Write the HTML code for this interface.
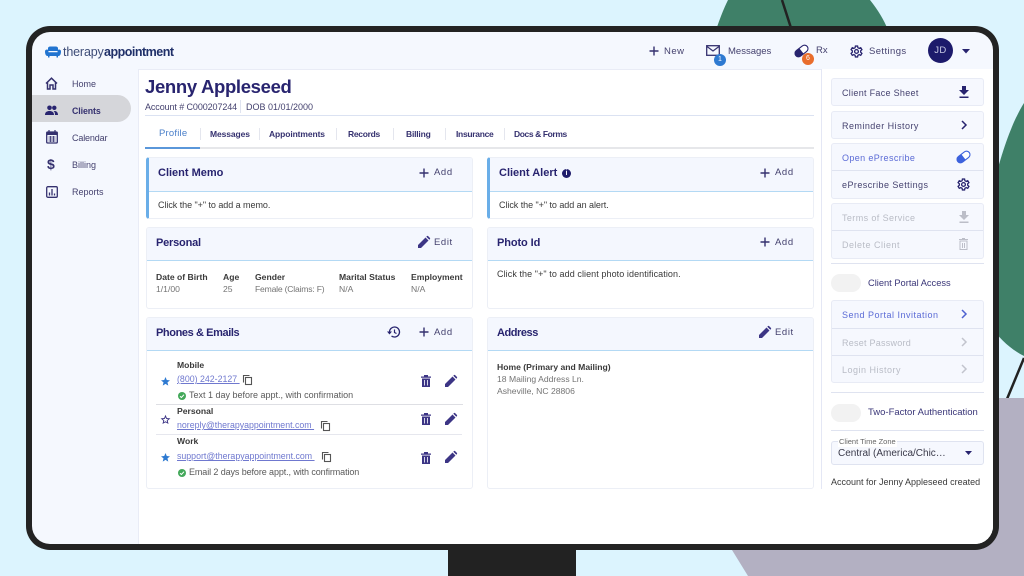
<!DOCTYPE html>
<html><head><meta charset="utf-8"><title>Therapy Appointment</title>
<style>
html,body{margin:0;padding:0}
#s{position:relative;width:1024px;height:576px;overflow:hidden;background:#dcf4fe;font-family:"Liberation Sans",sans-serif;color:#2f2b6b}
#s div,#s span.t,#s svg.a{position:absolute}
.t{position:absolute;white-space:nowrap;line-height:12px;height:12px}
.nav{font-size:9px;color:#45426f}
.h{font-size:11px;font-weight:bold;color:#28246f}
.act{font-size:9.5px;letter-spacing:.6px;color:#45426f}
.b{font-size:9px;color:#3a3a3a}
.bb{font-size:8.6px;font-weight:bold;color:#3a3a3a}
.g{font-size:8.6px;color:#747474}
.tab{font-size:8.5px;font-weight:bold;color:#35316f;letter-spacing:-.1px}
.card{background:#fff;border:1px solid #eceff6;border-radius:3px;box-sizing:border-box;overflow:hidden}
.hd{left:0;right:0;top:0;background:linear-gradient(#f4f7fe calc(100% - 1px),#b3d9f4 0)}
.rb{background:#f6f8fe;border:1px solid #e8ebf5;border-radius:3px;box-sizing:border-box}
.r{font-size:9px;letter-spacing:.4px;color:#45426f}
.dis{color:#b9bcc6}
.blue{color:#5b6bd6}
.lnk{font-size:8.8px;color:#6f78cf;text-decoration:underline}
.sep{background:#dfe3f0;height:1px}
svg{overflow:visible}
</style></head><body>
<div id="s">
<svg class="a" style="left:0;top:0" width="1024" height="576">
<path d="M716 30C720 18 724 8 728 0H870C878 10 884 20 888 30Z" fill="#3f8068"/>
<path d="M782 0L791 28" stroke="#222" stroke-width="2.5"/>
<path d="M990 200C1000 155 1012 122 1024 103V356C1012 350 1000 340 990 325Z" fill="#3f8068"/>
<path d="M1024 358L1007 399" stroke="#222" stroke-width="2.5"/>
<path d="M732 550H960V398H1024V576H748Z" fill="#b3b0c2"/>
<rect x="448" y="548" width="128" height="28" fill="#222"/>
</svg>
<div style="left:26px;top:26px;width:973px;height:524px;background:#232323;border-radius:24px"></div>
<div style="left:32px;top:32px;width:961px;height:512px;background:#f5f8fe;border-radius:18px;overflow:hidden">
  <div style="left:106px;top:37px;width:855px;height:475px;background:#fff;border-left:1px solid #e9ecf6;border-top:1px solid #e9ecf6;box-sizing:border-box"></div>
  <div style="left:0;top:63px;width:99px;height:27px;background:#d5d6da;border-radius:0 14px 14px 0"></div>
  <div style="left:789px;top:37px;width:1px;height:420px;background:#e4e7f5"></div>
  <div style="left:790px;top:37px;width:171px;height:475px;background:#fff"></div>
</div>

<!-- logo -->
<svg class="a" style="left:45px;top:46px" width="16" height="13" viewBox="0 0 16 13"><path d="M3 2.500C3 1 4 .5 5.500 .5H10.500C12 .5 13 1 13 2.500V5H3Z" fill="#2274d0"/><path d="M0 5.500C0 4 1 3.500 2 3.500C3 3.500 3.500 4.500 3.500 6.200H12.500C12.500 4.500 13 3.500 14 3.500C15 3.500 16 4 16 5.500C16 7 15.500 10 13.500 10H13V11.500H11.500V10H4.500V11.500H3V10H2.500C.5 10 0 7 0 5.500Z" fill="#2274d0"/></svg>
<span class="t" style="left:63px;top:46px;font-size:12.5px;color:#3d4c77;letter-spacing:-.15px">therapy</span>
<span class="t" style="left:104px;top:46px;font-size:12.5px;font-weight:bold;color:#1f2f68;letter-spacing:-.5px">appointment</span>

<!-- sidebar -->
<svg class="a" style="left:45px;top:77px" width="13" height="13" viewBox="0 0 13 13"><path d="M1 6.500L6.500 1.200L12 6.500M2.500 5.500V12H5V8H8V12H10.500V5.500" fill="none" stroke="#35316f" stroke-width="1.500"/></svg>
<span class="t nav" style="left:72px;top:78px">Home</span>
<svg class="a" style="left:45px;top:105px" width="13" height="11" viewBox="0 0 13 11"><circle cx="4.500" cy="2.800" r="2.300" fill="#28246f"/><circle cx="9.300" cy="2.800" r="2.200" fill="#28246f"/><path d="M0 10C0 7 2 6 4.500 6S9 7 9 10ZM9.500 6C11.500 6 13 7.200 13 10H10C10 8 9.800 7 8.500 6.300Z" fill="#28246f"/></svg>
<span class="t nav" style="left:72px;top:105px;font-size:8.8px;font-weight:bold;color:#35316f;letter-spacing:-.1px">Clients</span>
<svg class="a" style="left:46px;top:130px" width="12" height="14" viewBox="0 0 12 14"><rect x=".7" y="2" width="10.600" height="11" rx="1" fill="none" stroke="#35316f" stroke-width="1.300"/><rect x="1" y="2" width="10" height="3" fill="#35316f"/><path d="M3 0V3M9 0V3" stroke="#35316f" stroke-width="1.200"/><path d="M2.500 7H9.500M2.500 9H9.500M2.500 11H9.500M4.500 6V12M7.500 6V12" stroke="#35316f" stroke-width=".8"/></svg>
<span class="t nav" style="left:72px;top:132px;letter-spacing:-.15px">Calendar</span>
<span class="t" style="left:47px;top:158px;font-size:14px;line-height:13px;height:13px;font-weight:bold;color:#35316f">$</span>
<span class="t nav" style="left:72px;top:159px">Billing</span>
<svg class="a" style="left:46px;top:186px" width="12" height="12" viewBox="0 0 12 12"><rect x=".7" y=".7" width="10.600" height="10.600" rx="1.200" fill="none" stroke="#35316f" stroke-width="1.300"/><path d="M3.500 9.500V6.500M6 9.500V3M8.500 9.500V7.500" stroke="#35316f" stroke-width="1.300"/></svg>
<span class="t nav" style="left:72px;top:186px">Reports</span>

<!-- top nav -->
<svg class="a" style="left:649px;top:46px" width="10" height="10" viewBox="0 0 10 10"><path d="M5 .5V9.500M.5 5H9.500" stroke="#35316f" stroke-width="1.400"/></svg>
<span class="t act" style="left:664px;top:46px;letter-spacing:.5px">New</span>
<svg class="a" style="left:706px;top:45px" width="14" height="11" viewBox="0 0 14 11"><rect x=".7" y=".7" width="12.600" height="9.600" fill="none" stroke="#35316f" stroke-width="1.300"/><path d="M1 1.500L7 6L13 1.500" fill="none" stroke="#35316f" stroke-width="1.200"/></svg>
<div style="left:714px;top:54px;width:12px;height:12px;border-radius:50%;background:#2e7ad1;color:#fff;font-size:7px;line-height:12px;text-align:center">1</div>
<span class="t act" style="left:728px;top:46px;letter-spacing:0">Messages</span>
<svg class="a" style="left:795px;top:45px" width="13" height="12" viewBox="0 0 13 12"><g transform="rotate(-38 6.500 6)"><rect x="-.8" y="2.500" width="14.600" height="7" rx="3.500" fill="#fff" stroke="#28246f" stroke-width="1.100"/><path d="M2.700 2.500H6.500V9.500H2.700A3.500 3.500 0 0 1 2.700 2.500Z" fill="#28246f"/></g></svg>
<div style="left:802px;top:53px;width:12px;height:12px;border-radius:50%;background:#e96d2c;color:#fff;font-size:7px;line-height:12px;text-align:center">6</div>
<span class="t act" style="left:816px;top:45px;letter-spacing:0">Rx</span>
<svg class="a" style="left:850px;top:45px" width="13" height="13" viewBox="0 0 24 24"><path d="M10 2H14L14.600 5L17 6.200L19.800 5L22 8.600L19.700 10.600V13.400L22 15.400L19.800 19L17 17.800L14.600 19L14 22H10L9.400 19L7 17.800L4.200 19L2 15.400L4.300 13.400V10.600L2 8.600L4.200 5L7 6.200L9.400 5Z" fill="none" stroke="#28246f" stroke-width="2.400"/><circle cx="12" cy="12" r="3.500" fill="none" stroke="#28246f" stroke-width="2.400"/></svg>
<span class="t act" style="left:869px;top:46px;letter-spacing:.4px">Settings</span>
<div style="left:928px;top:38px;width:25px;height:25px;border-radius:50%;background:#1c1a6b;color:#c9cbe4;font-size:9.5px;line-height:25px;text-align:center;letter-spacing:.4px">JD</div>
<svg class="a" style="left:962px;top:49px" width="8" height="5"><path d="M0 0H8L4 4.500Z" fill="#28246f"/></svg>

<!-- header -->
<span class="t" style="left:145px;top:75px;height:24px;line-height:24px;font-size:18.5px;font-weight:bold;color:#28246f;letter-spacing:-.33px">Jenny Appleseed</span>
<span class="t" style="left:145px;top:101px;font-size:9px;color:#45426f;letter-spacing:-.1px">Account # C000207244</span>
<div style="left:240px;top:100px;width:1px;height:13px;background:#dfe3f0"></div>
<span class="t" style="left:246px;top:101px;font-size:9px;color:#45426f">DOB 01/01/2000</span>
<div style="left:145px;top:115px;width:669px;height:1px;background:#dbe2f2"></div>
<div style="left:145px;top:147px;width:669px;height:2px;background:#e6e7ea"></div>
<div style="left:145px;top:147px;width:55px;height:2px;background:#5a97da"></div>
<span class="t tab" style="left:159px;top:128px;color:#4a7fc9;font-weight:normal;font-size:9.5px;letter-spacing:.2px">Profile</span>
<span class="t tab" style="left:210px;top:128px">Messages</span>
<span class="t tab" style="left:269px;top:128px">Appointments</span>
<span class="t tab" style="left:348px;top:128px;letter-spacing:-.3px">Records</span>
<span class="t tab" style="left:406px;top:128px;letter-spacing:-.2px">Billing</span>
<span class="t tab" style="left:456px;top:128px;letter-spacing:-.3px">Insurance</span>
<span class="t tab" style="left:514px;top:128px;letter-spacing:-.4px">Docs &amp; Forms</span>
<div style="left:200px;top:128px;width:1px;height:12px;background:#e4e6ee"></div>
<div style="left:259px;top:128px;width:1px;height:12px;background:#e4e6ee"></div>
<div style="left:336px;top:128px;width:1px;height:12px;background:#e4e6ee"></div>
<div style="left:393px;top:128px;width:1px;height:12px;background:#e4e6ee"></div>
<div style="left:445px;top:128px;width:1px;height:12px;background:#e4e6ee"></div>
<div style="left:504px;top:128px;width:1px;height:12px;background:#e4e6ee"></div>

<!-- cards -->
<div class="card" style="left:146px;top:157px;width:327px;height:62px;border-left:3px solid #6aaee8"><div class="hd" style="height:34px"></div></div>
<div class="card" style="left:487px;top:157px;width:327px;height:62px;border-left:3px solid #6aaee8"><div class="hd" style="height:34px"></div></div>
<div class="card" style="left:146px;top:227px;width:327px;height:82px"><div class="hd" style="height:33px"></div></div>
<div class="card" style="left:487px;top:227px;width:327px;height:82px"><div class="hd" style="height:33px"></div></div>
<div class="card" style="left:146px;top:317px;width:327px;height:172px"><div class="hd" style="height:33px"></div></div>
<div class="card" style="left:487px;top:317px;width:327px;height:172px"><div class="hd" style="height:33px"></div></div>

<span class="t h" style="left:158px;top:167px">Client Memo</span>
<span class="t h" style="left:499px;top:167px">Client Alert</span>
<div style="left:562px;top:169px;width:9px;height:9px;border-radius:50%;background:#1f1c6b;color:#fff;font-size:7px;line-height:9px;text-align:center;font-weight:bold">i</div>
<span class="t h" style="left:156px;top:237px;letter-spacing:-.2px">Personal</span>
<span class="t h" style="left:497px;top:237px;letter-spacing:-.1px">Photo Id</span>
<span class="t h" style="left:156px;top:327px;letter-spacing:-.4px">Phones &amp; Emails</span>
<span class="t h" style="left:497px;top:327px;letter-spacing:-.45px">Address</span>

<!-- add / edit -->
<svg class="a" style="left:419px;top:168px" width="10" height="10" viewBox="0 0 10 10"><path d="M5 .5V9.500M.5 5H9.500" stroke="#35316f" stroke-width="1.400"/></svg>
<span class="t act" style="left:434px;top:167px">Add</span>
<svg class="a" style="left:760px;top:168px" width="10" height="10" viewBox="0 0 10 10"><path d="M5 .5V9.500M.5 5H9.500" stroke="#35316f" stroke-width="1.400"/></svg>
<span class="t act" style="left:775px;top:167px">Add</span>
<svg class="a" style="left:418px;top:236px" width="12" height="12" viewBox="0 0 12 12"><path d="M0 12V9L7.500 1.500L10.500 4.500L3 12ZM8.300 .7L9 0C9.300-.2 9.700-.2 10 0L12 2C12.200 2.300 12.200 2.700 12 3L11.300 3.700Z" fill="#3c3585"/></svg>
<span class="t act" style="left:434px;top:237px">Edit</span>
<svg class="a" style="left:760px;top:237px" width="10" height="10" viewBox="0 0 10 10"><path d="M5 .5V9.500M.5 5H9.500" stroke="#35316f" stroke-width="1.400"/></svg>
<span class="t act" style="left:775px;top:237px">Add</span>
<svg class="a" style="left:387px;top:326px" width="13" height="12" viewBox="0 0 13 12"><path d="M2.500 6A5 5 0 1 1 4.500 10" fill="none" stroke="#28246f" stroke-width="1.300"/><path d="M0 5.500H5L2.500 8.500Z" fill="#28246f"/><path d="M7.500 3.500V6.500L9.500 7.500" fill="none" stroke="#28246f" stroke-width="1.200"/></svg>
<svg class="a" style="left:419px;top:327px" width="10" height="10" viewBox="0 0 10 10"><path d="M5 .5V9.500M.5 5H9.500" stroke="#35316f" stroke-width="1.400"/></svg>
<span class="t act" style="left:434px;top:327px">Add</span>
<svg class="a" style="left:759px;top:326px" width="12" height="12" viewBox="0 0 12 12"><path d="M0 12V9L7.500 1.500L10.500 4.500L3 12ZM8.300 .7L9 0C9.300-.2 9.700-.2 10 0L12 2C12.200 2.300 12.200 2.700 12 3L11.300 3.700Z" fill="#3c3585"/></svg>
<span class="t act" style="left:775px;top:327px">Edit</span>

<!-- bodies -->
<span class="t b" style="left:158px;top:199px;letter-spacing:-.05px">Click the "+" to add a memo.</span>
<span class="t b" style="left:499px;top:199px;letter-spacing:-.05px">Click the "+" to add an alert.</span>
<span class="t bb" style="left:156px;top:271px">Date of Birth</span><span class="t g" style="left:156px;top:283px">1/1/00</span>
<span class="t bb" style="left:223px;top:271px">Age</span><span class="t g" style="left:223px;top:283px">25</span>
<span class="t bb" style="left:255px;top:271px">Gender</span><span class="t g" style="left:255px;top:283px;letter-spacing:-.2px">Female (Claims: F)</span>
<span class="t bb" style="left:339px;top:271px">Marital Status</span><span class="t g" style="left:339px;top:283px">N/A</span>
<span class="t bb" style="left:411px;top:271px">Employment</span><span class="t g" style="left:411px;top:283px">N/A</span>
<span class="t b" style="left:497px;top:268px;letter-spacing:.08px">Click the "+" to add client photo identification.</span>
<span class="t bb" style="left:497px;top:361px">Home (Primary and Mailing)</span>
<span class="t g" style="left:497px;top:373px">18 Mailing Address Ln.</span>
<span class="t g" style="left:497px;top:385px">Asheville, NC 28806</span>

<!-- contacts -->
<span class="t bb" style="left:177px;top:359px">Mobile</span>
<span class="t lnk" style="left:177px;top:373px">(800) 242-2127&nbsp;</span>
<span class="t b" style="left:189px;top:389px;color:#5a5a5a">Text 1 day before appt., with confirmation</span>
<svg class="a" style="left:178px;top:392px" width="8" height="8" viewBox="0 0 8 8"><circle cx="4" cy="4" r="4" fill="#43a85a"/><path d="M2 4.200L3.400 5.500L6 2.700" fill="none" stroke="#fff" stroke-width="1"/></svg>
<div style="left:156px;top:404px;width:307px;height:1px;background:#dedfe4"></div>
<span class="t bb" style="left:177px;top:405px">Personal</span>
<span class="t lnk" style="left:177px;top:419px">noreply@therapyappointment.com&nbsp;</span>
<div style="left:156px;top:434px;width:306px;height:1px;background:#e6e7ee"></div>
<span class="t bb" style="left:177px;top:435px">Work</span>
<span class="t lnk" style="left:177px;top:450px">support@therapyappointment.com&nbsp;</span>
<span class="t b" style="left:189px;top:466px;color:#5a5a5a;letter-spacing:-.1px">Email 2 days before appt., with confirmation</span>
<svg class="a" style="left:178px;top:469px" width="8" height="8" viewBox="0 0 8 8"><circle cx="4" cy="4" r="4" fill="#43a85a"/><path d="M2 4.200L3.400 5.500L6 2.700" fill="none" stroke="#fff" stroke-width="1"/></svg>
<svg class="a" style="left:161px;top:377px" width="9" height="9" viewBox="0 0 10 10"><path d="M5 0L6.400 3.400L10 3.700L7.200 6L8.100 9.600L5 7.700L1.900 9.600L2.800 6L0 3.700L3.600 3.400Z" fill="#2e7ad1"/></svg>
<svg class="a" style="left:161px;top:415px" width="9" height="9" viewBox="0 0 10 10"><path d="M5 1L6.200 3.900L9.200 4.100L6.900 6.100L7.600 9L5 7.500L2.400 9L3.100 6.100L.8 4.100L3.800 3.900Z" fill="none" stroke="#3c3585" stroke-width="1"/></svg>
<svg class="a" style="left:161px;top:453px" width="9" height="9" viewBox="0 0 10 10"><path d="M5 0L6.400 3.400L10 3.700L7.200 6L8.100 9.600L5 7.700L1.900 9.600L2.800 6L0 3.700L3.600 3.400Z" fill="#2e7ad1"/></svg>
<svg class="a" style="left:243px;top:375px" width="9" height="10" viewBox="0 0 9 10"><rect x="2.500" y="2.500" width="6" height="7" fill="none" stroke="#555" stroke-width="1.100"/><path d="M.5 7.500V.5H6.500" fill="none" stroke="#555" stroke-width="1.100"/></svg>
<svg class="a" style="left:321px;top:421px" width="9" height="10" viewBox="0 0 9 10"><rect x="2.500" y="2.500" width="6" height="7" fill="none" stroke="#555" stroke-width="1.100"/><path d="M.5 7.500V.5H6.500" fill="none" stroke="#555" stroke-width="1.100"/></svg>
<svg class="a" style="left:322px;top:452px" width="9" height="10" viewBox="0 0 9 10"><rect x="2.500" y="2.500" width="6" height="7" fill="none" stroke="#555" stroke-width="1.100"/><path d="M.5 7.500V.5H6.500" fill="none" stroke="#555" stroke-width="1.100"/></svg>
<svg class="a" style="left:421px;top:375px" width="10" height="12" viewBox="0 0 10 12"><path d="M0 1.500H10V2.800H0ZM3 0H7V1.500H3ZM1 3.500H9V12H1Z" fill="#3c3585"/><path d="M3.500 5V10.500M6.500 5V10.500" stroke="#d8d8ea" stroke-width="1"/></svg>
<svg class="a" style="left:421px;top:413px" width="10" height="12" viewBox="0 0 10 12"><path d="M0 1.500H10V2.800H0ZM3 0H7V1.500H3ZM1 3.500H9V12H1Z" fill="#3c3585"/><path d="M3.500 5V10.500M6.500 5V10.500" stroke="#d8d8ea" stroke-width="1"/></svg>
<svg class="a" style="left:421px;top:452px" width="10" height="12" viewBox="0 0 10 12"><path d="M0 1.500H10V2.800H0ZM3 0H7V1.500H3ZM1 3.500H9V12H1Z" fill="#3c3585"/><path d="M3.500 5V10.500M6.500 5V10.500" stroke="#d8d8ea" stroke-width="1"/></svg>
<svg class="a" style="left:445px;top:375px" width="12" height="12" viewBox="0 0 12 12"><path d="M0 12V9L7.500 1.500L10.500 4.500L3 12ZM8.300 .7L9 0C9.300-.2 9.700-.2 10 0L12 2C12.200 2.300 12.200 2.700 12 3L11.300 3.700Z" fill="#3c3585"/></svg>
<svg class="a" style="left:445px;top:413px" width="12" height="12" viewBox="0 0 12 12"><path d="M0 12V9L7.500 1.500L10.500 4.500L3 12ZM8.300 .7L9 0C9.300-.2 9.700-.2 10 0L12 2C12.200 2.300 12.200 2.700 12 3L11.300 3.700Z" fill="#3c3585"/></svg>
<svg class="a" style="left:445px;top:451px" width="12" height="12" viewBox="0 0 12 12"><path d="M0 12V9L7.500 1.500L10.500 4.500L3 12ZM8.300 .7L9 0C9.300-.2 9.700-.2 10 0L12 2C12.200 2.300 12.200 2.700 12 3L11.300 3.700Z" fill="#3c3585"/></svg>

<!-- right panel -->
<div class="rb" style="left:831px;top:78px;width:153px;height:28px"></div>
<div class="rb" style="left:831px;top:111px;width:153px;height:28px"></div>
<div class="rb" style="left:831px;top:143px;width:153px;height:56px"></div>
<div class="sep" style="left:832px;top:170px;width:151px"></div>
<div class="rb" style="left:831px;top:203px;width:153px;height:56px"></div>
<div class="sep" style="left:832px;top:230px;width:151px"></div>
<div class="sep" style="left:831px;top:263px;width:153px"></div>
<div class="rb" style="left:831px;top:300px;width:153px;height:83px"></div>
<div class="sep" style="left:832px;top:328px;width:151px"></div>
<div class="sep" style="left:832px;top:355px;width:151px"></div>
<div class="sep" style="left:831px;top:392px;width:153px"></div>
<div class="sep" style="left:831px;top:430px;width:153px"></div>

<span class="t r" style="left:842px;top:87px;letter-spacing:.3px">Client Face Sheet</span>
<span class="t r" style="left:842px;top:120px;letter-spacing:.46px">Reminder History</span>
<span class="t r blue" style="left:842px;top:152px;letter-spacing:.38px">Open ePrescribe</span>
<span class="t r" style="left:842px;top:179px;letter-spacing:.44px">ePrescribe Settings</span>
<span class="t r dis" style="left:842px;top:212px;letter-spacing:.4px">Terms of Service</span>
<span class="t r dis" style="left:842px;top:239px;letter-spacing:.5px">Delete Client</span>
<span class="t r blue" style="left:842px;top:309px;letter-spacing:.5px">Send Portal Invitation</span>
<span class="t r dis" style="left:842px;top:337px;letter-spacing:.25px">Reset Password</span>
<span class="t r dis" style="left:842px;top:364px;letter-spacing:.5px">Login History</span>

<svg class="a" style="left:959px;top:86px" width="10" height="12" viewBox="0 0 10 12"><path d="M3 0H7V4H10L5 9L0 4H3ZM.5 10.500H9.500V12H.5Z" fill="#28246f"/></svg>
<svg class="a" style="left:961px;top:120px" width="6" height="10"><path d="M1 1L5 5L1 9" fill="none" stroke="#28246f" stroke-width="1.500"/></svg>
<svg class="a" style="left:957px;top:151px" width="13" height="12" viewBox="0 0 13 12"><g transform="rotate(-38 6.500 6)"><rect x="-.8" y="2.500" width="14.600" height="7" rx="3.500" fill="#fff" stroke="#3d62dd" stroke-width="1.100"/><path d="M2.700 2.500H6.500V9.500H2.700A3.500 3.500 0 0 1 2.700 2.500Z" fill="#3d62dd"/></g></svg>
<svg class="a" style="left:957px;top:178px" width="13" height="13" viewBox="0 0 24 24"><path d="M10 2H14L14.600 5L17 6.200L19.800 5L22 8.600L19.700 10.600V13.400L22 15.400L19.800 19L17 17.800L14.600 19L14 22H10L9.400 19L7 17.800L4.200 19L2 15.400L4.300 13.400V10.600L2 8.600L4.200 5L7 6.200L9.400 5Z" fill="none" stroke="#28246f" stroke-width="2.400"/><circle cx="12" cy="12" r="3.500" fill="none" stroke="#28246f" stroke-width="2.400"/></svg>
<svg class="a" style="left:959px;top:211px" width="10" height="12" viewBox="0 0 10 12"><path d="M3 0H7V4H10L5 9L0 4H3ZM.5 10.500H9.500V12H.5Z" fill="#bcbec8"/></svg>
<svg class="a" style="left:958px;top:238px" width="11" height="12" viewBox="0 0 11 12"><path d="M1 1.500H10M4 .5H7M2 3V11.500H9V3ZM4.500 5V10M6.500 5V10" fill="none" stroke="#bcbec8" stroke-width="1"/></svg>
<svg class="a" style="left:961px;top:309px" width="6" height="10"><path d="M1 1L5 5L1 9" fill="none" stroke="#4f62d0" stroke-width="1.500"/></svg>
<svg class="a" style="left:961px;top:337px" width="6" height="10"><path d="M1 1L5 5L1 9" fill="none" stroke="#c2c4cd" stroke-width="1.500"/></svg>
<svg class="a" style="left:961px;top:364px" width="6" height="10"><path d="M1 1L5 5L1 9" fill="none" stroke="#c2c4cd" stroke-width="1.500"/></svg>

<div style="left:831px;top:274px;width:30px;height:18px;border-radius:9px;background:#f2f2f2"></div>
<span class="t" style="left:868px;top:277px;font-size:9.3px;color:#3a3678">Client Portal Access</span>
<div style="left:831px;top:404px;width:30px;height:18px;border-radius:9px;background:#f2f2f2"></div>
<span class="t" style="left:868px;top:407px;font-size:9.5px;color:#3a3678">Two-Factor Authentication</span>

<div style="left:831px;top:441px;width:153px;height:24px;background:#f6f8fe;border:1px solid #dfe3f0;border-radius:3px;box-sizing:border-box"></div>
<span class="t" style="left:838px;top:437px;height:10px;line-height:10px;font-size:7.500px;color:#666;background:#fff;padding:0 1px">Client Time Zone</span>
<span class="t" style="left:838px;top:448px;font-size:10px;color:#3a3a4a">Central (America/Chic…</span>
<svg class="a" style="left:965px;top:451px" width="7" height="4"><path d="M0 0H7L3.500 4Z" fill="#28246f"/></svg>
<span class="t b" style="left:831px;top:476px">Account for Jenny Appleseed created</span>
</div>
</body></html>
